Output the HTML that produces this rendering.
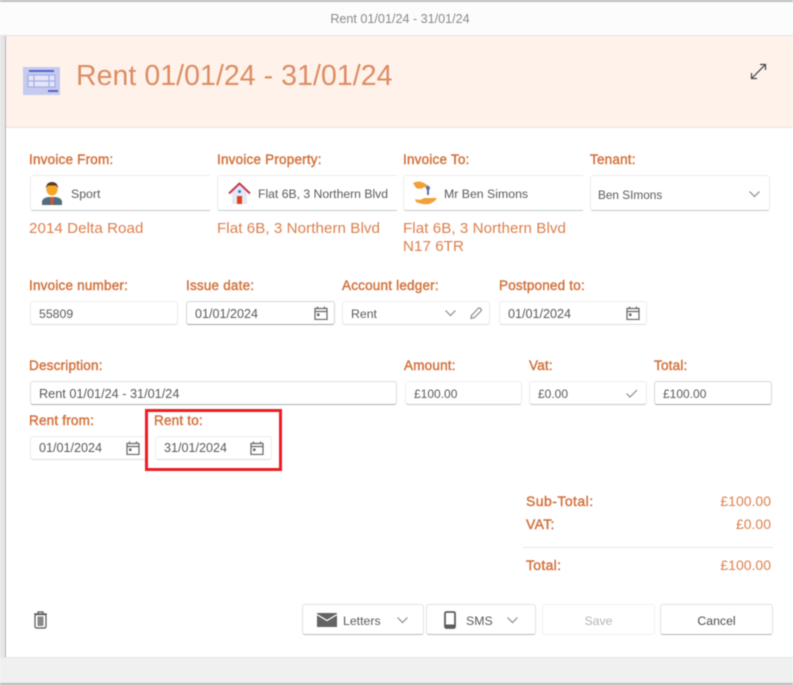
<!DOCTYPE html>
<html><head><meta charset="utf-8"><style>
html,body{margin:0;padding:0;background:#fff}
#p{position:relative;width:793px;height:685px;overflow:hidden;background:#fff;font-family:"Liberation Sans",sans-serif;filter:blur(.4px)}
#p div,#p svg{position:absolute}
.l{color:#d2703a;font-size:13.5px;letter-spacing:.2px;line-height:16px;white-space:nowrap;-webkit-text-stroke:.4px #d2703a}
.o{color:#dc7f4c;font-size:15.1px;letter-spacing:.08px;line-height:18px;white-space:nowrap}
.v{color:#dc7f4c;font-size:14px;line-height:16px;white-space:nowrap}
.b{box-sizing:border-box;background:#fff;border:1px solid #ececec;border-bottom:1.5px solid #c8c8c8;border-radius:3px}
.t{color:#5a5a5a;font-size:12.3px;line-height:16px;white-space:nowrap}
.i{fill:none;stroke:#666;stroke-width:1.2}
</style></head><body><div id="p">
<div style="left:0;top:0;width:793px;height:2px;background:#bdbdbd"></div>
<div style="left:0;top:2px;width:793px;height:33px;background:#fcfcfc"></div>
<div style="left:0;top:35px;width:793px;height:1px;background:#e4e4e4"></div>
<div class="t" style="left:0;top:11px;width:800px;text-align:center;color:#8a8a8a;font-size:12.6px">Rent 01/01/24 - 31/01/24</div>
<div style="left:0;top:36px;width:5px;height:622px;background:#e6e6e6"></div>
<div style="left:5px;top:36px;width:1px;height:622px;background:#b4b4b4"></div>
<div style="left:6px;top:36px;width:787px;height:91px;background:#fff2eb"></div>
<div style="left:6px;top:127px;width:787px;height:1px;background:#e8e2de"></div>
<svg style="left:23px;top:67px" width="37" height="28" viewBox="0 0 37 28"><rect width="37" height="28" fill="#c5cbef"/><rect x="6" y="3" width="25" height="2" fill="#5463c8"/><rect x="5" y="8" width="27" height="12" fill="#e4e6f8" stroke="#a4ade6" stroke-width="1.2"/><path d="M5 14h27M11 8v12M26 8v12" stroke="#a4ade6" stroke-width="1.2"/><rect x="25" y="23" width="10" height="2" fill="#5463c8"/></svg>
<div style="left:76px;top:58px;font-size:28.5px;line-height:36px;color:#dc8d62;white-space:nowrap;letter-spacing:.05px">Rent 01/01/24 - 31/01/24</div>
<svg style="left:750px;top:63px" width="17" height="17" viewBox="0 0 17 17"><path d="M1.500 15.500L15.500 1.500M10 1.500H15.500V7M1.500 10V15.500H7" fill="none" stroke="#444" stroke-width="1.200"/></svg>

<div class="l" style="left:29px;top:152px">Invoice From:</div>
<div class="l" style="left:217px;top:152px">Invoice Property:</div>
<div class="l" style="left:403px;top:152px">Invoice To:</div>
<div class="l" style="left:590px;top:152px">Tenant:</div>

<div class="b" style="left:30px;top:175px;width:180px;height:36px;border-right:0;border-radius:3px 0 0 3px"></div>
<div class="b" style="left:217px;top:175px;width:180px;height:36px;border-right:0;border-radius:3px 0 0 3px"></div>
<div class="b" style="left:403px;top:175px;width:180px;height:36px;border-right:0;border-radius:3px 0 0 3px"></div>
<div class="b" style="left:590px;top:175px;width:180px;height:36px"></div>

<svg style="left:42px;top:182px" width="20" height="23" viewBox="0 0 20 23"><path d="M0 23v-4q1-3 6-4h8q5 1 6 4v4z" fill="#4f6f80"/><path d="M8 15h4l-1 8H9z" fill="#d9542e"/><circle cx="10" cy="8" r="5.500" fill="#f6a623"/><path d="M4 7q0-7 6-7t6 7q-1-3-3-3.500H7Q5 4 4 7z" fill="#5c3a24"/></svg>
<div class="t" style="left:71px;top:186px">Sport</div>
<svg style="left:228px;top:182px" width="23" height="23" viewBox="0 0 23 23"><path d="M4 10L11.500 3 19 10v12H4z" fill="#e6e8f6"/><rect x="9" y="14" width="5" height="8" fill="#d9431e"/><circle cx="11.500" cy="9.500" r="1.500" fill="#2f7fc1"/><path d="M1 11.500L11.500 1.500 22 11.500" fill="none" stroke="#c7384a" stroke-width="2"/></svg>
<div class="t" style="left:258px;top:186px;font-size:12.200px">Flat 6B, 3 Northern Blvd</div>
<svg style="left:412px;top:181px" width="26" height="24" viewBox="0 0 26 24"><path d="M1 2q6-3 11 0l5 3q-1 3-5 1-2 3-8 1z" fill="#f2a03a"/><path d="M3 18q5 2 9-1h13q-2 4-8 6-6 1-13-2z" fill="#f2a03a"/><path d="M16 7v7" stroke="#5b6fb0" stroke-width="2"/><circle cx="16" cy="7" r="2" fill="#5b6fb0"/></svg>
<div class="t" style="left:444px;top:186px">Mr Ben Simons</div>
<div class="t" style="left:598px;top:187px;font-size:11.8px">Ben SImons</div>
<svg class="i" style="left:749px;top:191px" width="11" height="7" viewBox="0 0 11 7"><path d="M.5 .5l5 5 5-5" stroke="#8c8c8c"/></svg>

<div class="o" style="left:29px;top:220px">2014 Delta Road</div>
<div class="o" style="left:217px;top:220px">Flat 6B, 3 Northern Blvd</div>
<div class="o" style="left:403px;top:220px">Flat 6B, 3 Northern Blvd</div>
<div class="o" style="left:403px;top:238px">N17 6TR</div>

<div class="l" style="left:29px;top:278px">Invoice number:</div>
<div class="l" style="left:186px;top:278px">Issue date:</div>
<div class="l" style="left:342px;top:278px">Account ledger:</div>
<div class="l" style="left:499px;top:278px">Postponed to:</div>

<div class="b" style="left:30px;top:301px;width:148px;height:24px;border-bottom-color:#dcdcdc"></div>
<div class="t" style="left:39px;top:306px">55809</div>
<div class="b" style="left:186px;top:301px;width:149px;height:24px;border-color:#d4d4d4;border-bottom-color:#a8a8a8"></div>
<div class="t" style="left:195px;top:306px;font-size:12.6px">01/01/2024</div>
<svg class="i" style="left:314px;top:306px" width="14" height="14" viewBox="0 0 14 14"><path d="M1 2.500h12v11H1zM1 5.500h12M3.500 .5v2M10.500 .5v2"/><rect x="3" y="7.500" width="2.500" height="2.500" fill="#666" stroke="none"/></svg>
<div class="b" style="left:342px;top:301px;width:148px;height:24px;border-bottom-color:#dcdcdc"></div>
<div class="t" style="left:351px;top:306px">Rent</div>
<svg class="i" style="left:445px;top:310px" width="11" height="7" viewBox="0 0 11 7"><path d="M.5 .5l5 5 5-5" stroke="#8c8c8c"/></svg>
<svg class="i" style="left:470px;top:307px" width="12" height="12" viewBox="0 0 12 12"><path d="M1.500 8.500L8 1.500q1-1 2.500 0t.5 2.500L4.500 10.500 1 11.500z" stroke="#8c8c8c"/></svg>
<div class="b" style="left:499px;top:301px;width:148px;height:24px;border-bottom-color:#dcdcdc"></div>
<div class="t" style="left:508px;top:306px;font-size:12.6px">01/01/2024</div>
<svg class="i" style="left:626px;top:306px" width="14" height="14" viewBox="0 0 14 14"><path d="M1 2.500h12v11H1zM1 5.500h12M3.500 .5v2M10.500 .5v2"/><rect x="3" y="7.500" width="2.500" height="2.500" fill="#666" stroke="none"/></svg>

<div class="l" style="left:29px;top:358px">Description:</div>
<div class="l" style="left:404px;top:358px">Amount:</div>
<div class="l" style="left:529px;top:358px">Vat:</div>
<div class="l" style="left:654px;top:358px">Total:</div>

<div class="b" style="left:30px;top:381px;width:367px;height:24px;border-color:#dedede;border-bottom-color:#aeaeae"></div>
<div class="t" style="left:39px;top:386px;font-size:12.7px">Rent 01/01/24 - 31/01/24</div>
<div class="b" style="left:405px;top:381px;width:117px;height:24px"></div>
<div class="t" style="left:414px;top:386px;font-size:12px">£100.00</div>
<div class="b" style="left:529px;top:381px;width:118px;height:24px"></div>
<div class="t" style="left:538px;top:386px;font-size:12px">£0.00</div>
<svg class="i" style="left:626px;top:389px" width="12" height="9" viewBox="0 0 12 9"><path d="M.5 4.500l3.500 3.500L11 1" stroke="#8c8c8c"/></svg>
<div class="b" style="left:654px;top:381px;width:118px;height:24px;border-color:#d8d8d8;border-bottom-color:#a8a8a8"></div>
<div class="t" style="left:663px;top:386px;font-size:12px">£100.00</div>

<div class="l" style="left:29px;top:413px">Rent from:</div>
<div class="b" style="left:30px;top:436px;width:118px;height:24px;border-bottom-color:#dcdcdc"></div>
<div class="t" style="left:39px;top:440px;font-size:12.6px">01/01/2024</div>
<svg class="i" style="left:126px;top:441px" width="14" height="14" viewBox="0 0 14 14"><path d="M1 2.500h12v11H1zM1 5.500h12M3.500 .5v2M10.500 .5v2"/><rect x="3" y="7.500" width="2.500" height="2.500" fill="#666" stroke="none"/></svg>

<div style="box-sizing:border-box;left:145px;top:409px;width:137px;height:62px;border:3px solid #ed1c24"></div>
<div class="l" style="left:154px;top:413px">Rent to:</div>
<div class="b" style="left:155px;top:436px;width:117px;height:24px;border-bottom-color:#dcdcdc"></div>
<div class="t" style="left:164px;top:440px;font-size:12.6px">31/01/2024</div>
<svg class="i" style="left:250px;top:441px" width="14" height="14" viewBox="0 0 14 14"><path d="M1 2.500h12v11H1zM1 5.500h12M3.500 .5v2M10.500 .5v2"/><rect x="3" y="7.500" width="2.500" height="2.500" fill="#666" stroke="none"/></svg>

<div class="l" style="left:526px;top:493px;font-size:14px;letter-spacing:.45px">Sub-Total:</div>
<div class="v" style="right:22px;top:493px">£100.00</div>
<div class="l" style="left:526px;top:516px;font-size:14px;letter-spacing:.3px">VAT:</div>
<div class="v" style="right:22px;top:516px">£0.00</div>
<div style="left:523px;top:547px;width:250px;height:1px;background:#e8e8e8"></div>
<div class="l" style="left:526px;top:557px;font-size:14px;letter-spacing:.3px">Total:</div>
<div class="v" style="right:22px;top:557px">£100.00</div>

<svg style="left:33px;top:611px" width="15" height="18" viewBox="0 0 15 18"><path d="M1 3h13M5 3V1h5v2" fill="none" stroke="#555" stroke-width="1.200"/><rect x="2" y="3.500" width="11" height="13.500" rx="1.500" fill="#fff" stroke="#555" stroke-width="1.200"/><rect x="4.500" y="5.500" width="6" height="9.500" fill="#888"/></svg>

<div class="b" style="left:302px;top:604px;width:122px;height:31px;border-color:#e2e2e2;border-bottom-color:#bcbcbc"></div>
<svg style="left:317px;top:613px" width="20" height="14" viewBox="0 0 20 14"><rect width="20" height="14" fill="#636363"/><path d="M0 1.500l10 6 10-6" fill="none" stroke="#fff" stroke-width="1.300"/></svg>
<div class="t" style="left:343px;top:613px">Letters</div>
<svg class="i" style="left:397px;top:617px" width="11" height="7" viewBox="0 0 11 7"><path d="M.5 .5l5 5 5-5" stroke="#8c8c8c"/></svg>
<div class="b" style="left:426px;top:604px;width:110px;height:31px;border-color:#e2e2e2;border-bottom-color:#bcbcbc"></div>
<svg style="left:444px;top:611px" width="12" height="18" viewBox="0 0 12 18"><rect x="1" y="1" width="10" height="16" rx="1.500" fill="none" stroke="#5c5c5c" stroke-width="1.800"/><rect x="1" y="13.500" width="10" height="3.500" fill="#5c5c5c"/></svg>
<div class="t" style="left:466px;top:613px">SMS</div>
<svg class="i" style="left:507px;top:617px" width="11" height="7" viewBox="0 0 11 7"><path d="M.5 .5l5 5 5-5" stroke="#8c8c8c"/></svg>
<div class="b" style="left:542px;top:604px;width:113px;height:31px;border-color:#f0f0f0"></div>
<div class="t" style="left:542px;top:613px;width:113px;text-align:center;color:#b4b4b4">Save</div>
<div class="b" style="left:660px;top:604px;width:113px;height:31px;border-color:#e2e2e2;border-bottom-color:#b4b4b4"></div>
<div class="t" style="left:660px;top:613px;width:113px;text-align:center;color:#4c4c4c">Cancel</div>

<div style="left:0;top:657px;width:793px;height:1px;background:#e4e4e4"></div>
<div style="left:0;top:658px;width:793px;height:25px;background:#f0f0f0"></div>
<div style="left:0;top:683px;width:793px;height:2px;background:#b8b8b8"></div>
</div></body></html>
